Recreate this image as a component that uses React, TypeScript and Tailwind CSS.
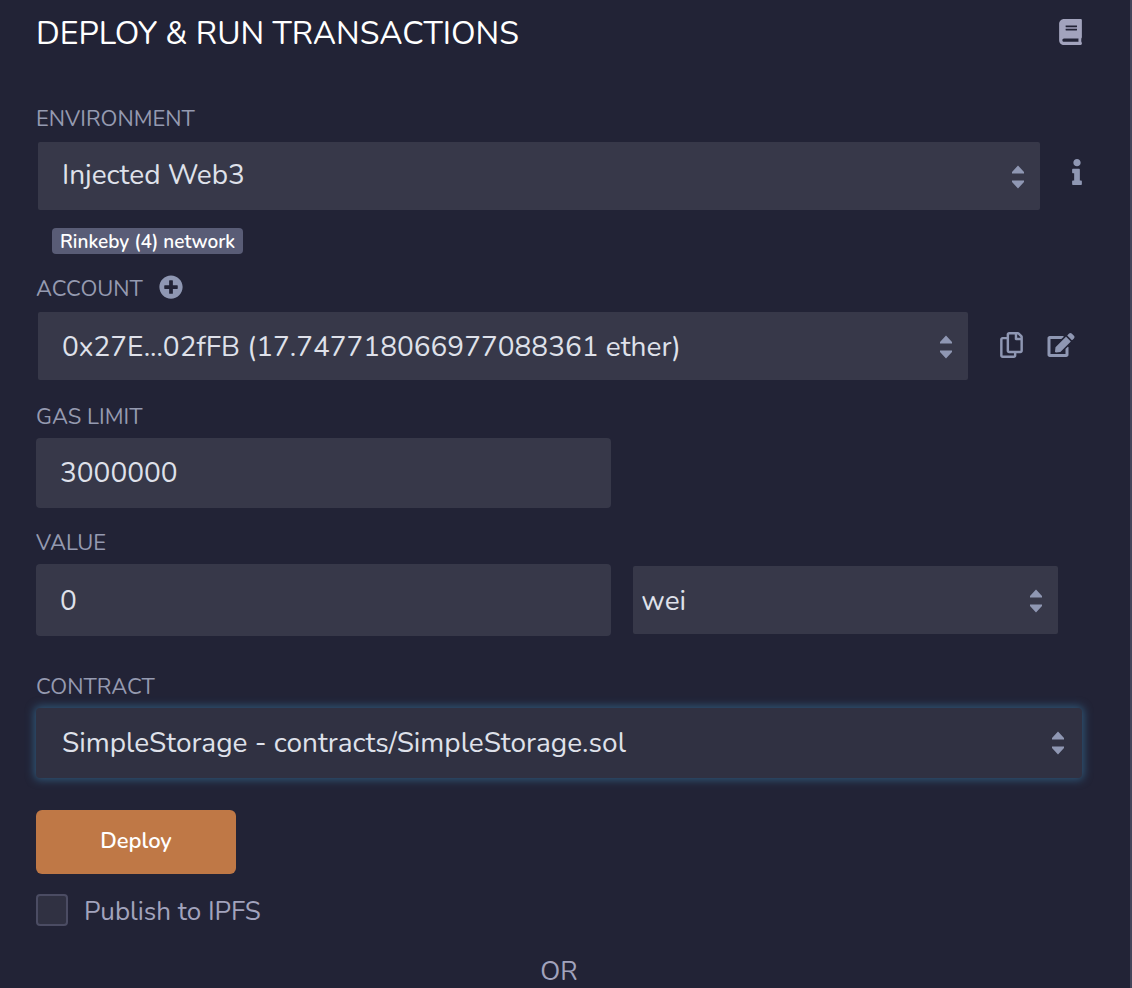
import type { ReactNode } from "react";
import { FaBook, FaEdit, FaInfo, FaPlusCircle, FaRegCopy } from "react-icons/fa";

type SelectFieldProps = {
  id: string;
  options: string[];
  className: string;
  arrowClassName?: string;
};

function SelectField({ id, options, className, arrowClassName = "right-4" }: SelectFieldProps) {
  return (
    <div className="relative min-w-0 flex-1">
      <select
        id={id}
        className={`block w-full appearance-none text-[28px] leading-9 text-[#dfe1ea] outline-none ${className}`}
      >
        {options.map((option) => (
          <option key={option}>{option}</option>
        ))}
      </select>
      <svg
        aria-hidden="true"
        viewBox="0 0 12 24"
        className={`pointer-events-none absolute top-[23px] h-6 w-3 fill-[#8f97b3] ${arrowClassName}`}
      >
        <path d="M6 0.5 12 7v1.5H0V7zM0 15.5h12V17l-6 6.5L0 17z" />
      </svg>
    </div>
  );
}

function FieldLabel({ htmlFor, children }: { htmlFor: string; children: ReactNode }) {
  return (
    <label htmlFor={htmlFor} className="block text-[22px] leading-7 text-[#959ab0]">
      {children}
    </label>
  );
}

const iconButton = "flex cursor-pointer items-center justify-center text-[#8f97b3]";

export default function App() {
  return (
    <main className="min-h-screen border-r-2 border-[#44455a] bg-[#222336] pt-3.5 pr-12 pl-9 font-['Nunito','Lato',sans-serif]">
      <header className="flex items-start justify-between">
        <h1 className="text-[32px] leading-10 text-white">DEPLOY &amp; RUN TRANSACTIONS</h1>
        <a href="#docs" aria-label="Documentation" className="mt-[5px] text-[#a2a3bd]">
          <FaBook className="h-[26px] w-[23px]" />
        </a>
      </header>

      <section className="mt-[51px]">
        <FieldLabel htmlFor="environment">ENVIRONMENT</FieldLabel>
        <div className="mt-[9px] ml-0.5 flex">
          <SelectField
            id="environment"
            options={["Injected Web3", "JavaScript VM", "Web3 Provider"]}
            className="h-[68px] rounded-xs bg-[#373849] pr-10 pb-0.5 pl-6"
          />
          <button type="button" aria-label="Environment info" className={`${iconButton} ml-8 h-[60px] w-[10px]`}>
            <FaInfo className="h-[26px] w-[10px]" />
          </button>
        </div>
        <span className="mt-[18px] ml-4 block h-[26px] w-fit rounded bg-[#595c76] px-2 text-[19px] leading-7 font-semibold text-white">
          Rinkeby (4) network
        </span>
      </section>

      <section className="mt-[21px]">
        <div className="flex items-start gap-4">
          <FieldLabel htmlFor="account">ACCOUNT</FieldLabel>
          <button type="button" aria-label="Add account" className={iconButton}>
            <FaPlusCircle className="size-6" />
          </button>
        </div>
        <div className="mt-[9px] ml-0.5 flex">
          <SelectField
            id="account"
            options={["0x27E...02fFB (17.747718066977088361 ether)"]}
            className="h-[68px] rounded-xs bg-[#373849] pt-0.5 pr-10 pl-6"
          />
          <div className="mr-[7px] ml-8 flex h-[66px] items-center gap-6">
            <button type="button" aria-label="Copy account" className={iconButton}>
              <FaRegCopy className="h-[26px] w-[23px]" />
            </button>
            <button type="button" aria-label="Sign a message" className={iconButton}>
              <FaEdit className="h-6 w-7" />
            </button>
          </div>
        </div>
      </section>

      <section className="mt-[23px]">
        <FieldLabel htmlFor="gas-limit">GAS LIMIT</FieldLabel>
        <input
          id="gas-limit"
          type="text"
          defaultValue="3000000"
          className="mt-[7px] block h-[70px] w-[55%] rounded bg-[#373849] px-6 text-[28px] leading-9 text-[#dfe1ea] outline-none"
        />
      </section>

      <section className="mt-[21px]">
        <FieldLabel htmlFor="value">VALUE</FieldLabel>
        <div className="mt-[7px] flex items-center">
          <input
            id="value"
            type="text"
            defaultValue="0"
            className="block h-[72px] w-[55%] rounded bg-[#373849] px-6 pt-0.5 text-[28px] leading-9 text-[#dfe1ea] outline-none"
          />
          <div className="mr-6 ml-[22px] flex flex-1">
            <label htmlFor="unit" className="sr-only" aria-label="Unit" />
            <SelectField
              id="unit"
              options={["wei", "gwei", "finney", "ether"]}
              className="h-[68px] rounded-xs bg-[#373849] pt-0.5 pr-10 pl-2"
            />
          </div>
        </div>
      </section>

      <section className="mt-[37px]">
        <FieldLabel htmlFor="contract">CONTRACT</FieldLabel>
        <div className="mt-[7px] flex">
          <SelectField
            id="contract"
            options={["SimpleStorage - contracts/SimpleStorage.sol"]}
            className="h-[70px] rounded bg-[#303142] pr-10 pl-[26px] shadow-[0_0_8px_2px_#2f5676]"
            arrowClassName="right-[18px]"
          />
        </div>
        <button
          type="button"
          className="mt-8 block h-16 w-[200px] cursor-pointer rounded-md bg-[#bf7846] pb-0.5 text-[22px] leading-8 font-semibold text-white"
        >
          Deploy
        </button>
        <div className="mt-5 flex items-start gap-4">
          <input
            id="publish"
            type="checkbox"
            className="size-8 appearance-none rounded border-2 border-[#4b4c63] bg-[#303142] checked:bg-[#bf7846]"
          />
          <label htmlFor="publish" className="mt-0.5 text-[26px] leading-8 text-[#a2a3bd]">
            Publish to IPFS
          </label>
        </div>
      </section>

      <p className="mt-7 text-center text-[26px] leading-8 text-[#a2a3bd]">OR</p>
    </main>
  );
}
